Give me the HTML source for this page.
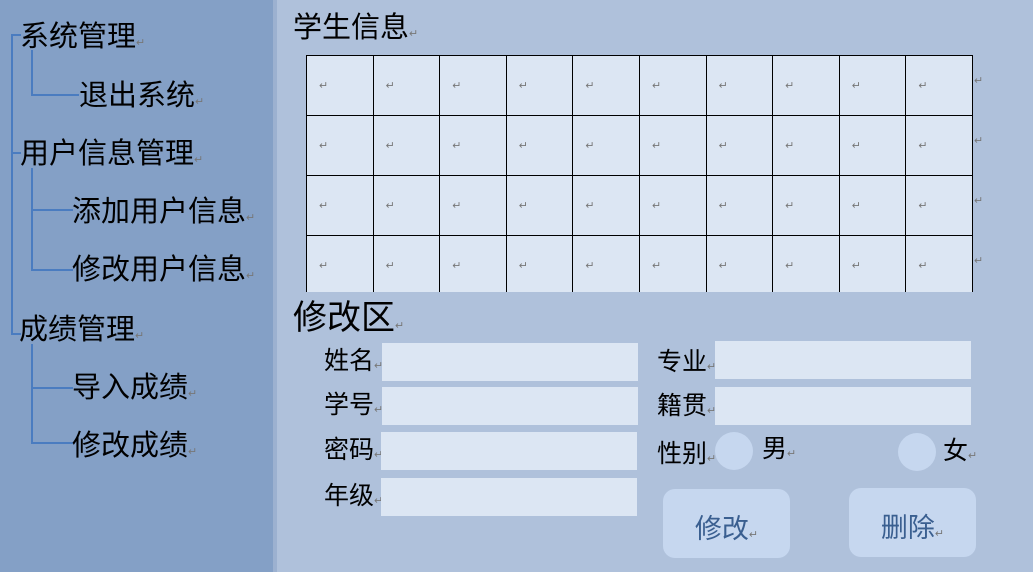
<!DOCTYPE html>
<html><head><meta charset="utf-8"><style>
*{margin:0;padding:0;box-sizing:border-box}
body{width:1033px;height:572px;overflow:hidden;position:relative;background:#afc1db;font-family:"Liberation Sans","Noto Sans CJK SC",sans-serif;color:#000}
.side{position:absolute;left:0;top:0;width:273px;height:572px;background:#84a0c6}
.t{position:absolute;white-space:nowrap;line-height:1}
.l{position:absolute;background:#4a7cc0}
.m{font-size:11px;color:#777}
table{position:absolute;left:306px;top:55px;border-collapse:collapse}
td{width:66.6px;height:60px;border:1px solid #000;background:#dce6f3;font-size:11px;color:#777;padding-left:12px}
.in{position:absolute;background:#dce6f3;width:256px;height:38px}
.c{position:absolute;width:38px;height:38px;border-radius:50%;background:#c6d7ef}
.b{position:absolute;width:127px;height:69px;border-radius:12px;background:#c6d7ef;color:#3a5f90;font-size:27px;text-align:center;line-height:1;padding-top:27px}
.s{font-size:29px}
</style></head><body>
<div class="side"></div>
<div style="position:absolute;left:273px;top:0;width:4px;height:572px;background:#9cb1d0"></div>
<div class="l" style="left:11px;top:34px;width:2px;height:301px"></div>
<div class="l" style="left:11px;top:34px;width:10px;height:2px"></div>
<div class="l" style="left:11px;top:152px;width:10px;height:2px"></div>
<div class="l" style="left:11px;top:333px;width:10px;height:2px"></div>
<div class="l" style="left:31px;top:50px;width:2px;height:46px"></div>
<div class="l" style="left:31px;top:94px;width:48px;height:2px"></div>
<div class="l" style="left:31px;top:168px;width:2px;height:103px"></div>
<div class="l" style="left:31px;top:209px;width:42px;height:2px"></div>
<div class="l" style="left:31px;top:269px;width:42px;height:2px"></div>
<div class="l" style="left:31px;top:344px;width:2px;height:100px"></div>
<div class="l" style="left:31px;top:387px;width:42px;height:2px"></div>
<div class="l" style="left:31px;top:442px;width:42px;height:2px"></div>
<div class="t s" style="left:20px;top:23px">系统管理<span class="m">↵</span></div>
<div class="t s" style="left:79px;top:82px">退出系统<span class="m">↵</span></div>
<div class="t s" style="left:20px;top:140px">用户信息管理<span class="m">↵</span></div>
<div class="t s" style="left:72px;top:198px">添加用户信息<span class="m">↵</span></div>
<div class="t s" style="left:72px;top:256px">修改用户信息<span class="m">↵</span></div>
<div class="t s" style="left:19px;top:316px">成绩管理<span class="m">↵</span></div>
<div class="t s" style="left:72px;top:374px">导入成绩<span class="m">↵</span></div>
<div class="t s" style="left:72px;top:432px">修改成绩<span class="m">↵</span></div>

<div class="t s" style="left:293px;top:14px">学生信息<span class="m">↵</span></div>
<div style="position:absolute;left:306px;top:55px;width:667px;height:237px;overflow:hidden">
<table style="left:0;top:0">
<tr><td>↵</td><td>↵</td><td>↵</td><td>↵</td><td>↵</td><td>↵</td><td>↵</td><td>↵</td><td>↵</td><td>↵</td></tr>
<tr><td>↵</td><td>↵</td><td>↵</td><td>↵</td><td>↵</td><td>↵</td><td>↵</td><td>↵</td><td>↵</td><td>↵</td></tr>
<tr><td>↵</td><td>↵</td><td>↵</td><td>↵</td><td>↵</td><td>↵</td><td>↵</td><td>↵</td><td>↵</td><td>↵</td></tr>
<tr><td>↵</td><td>↵</td><td>↵</td><td>↵</td><td>↵</td><td>↵</td><td>↵</td><td>↵</td><td>↵</td><td>↵</td></tr>
</table></div>
<div class="t m" style="left:974px;top:76px">↵</div>
<div class="t m" style="left:974px;top:136px">↵</div>
<div class="t m" style="left:974px;top:196px">↵</div>
<div class="t m" style="left:974px;top:256px">↵</div>

<div class="t" style="left:293px;top:301px;font-size:34px">修改区<span class="m">↵</span></div>
<div class="t" style="left:324px;top:349px;font-size:25px">姓名<span class="m">↵</span></div>
<div class="t" style="left:324px;top:393px;font-size:25px">学号<span class="m">↵</span></div>
<div class="t" style="left:324px;top:438px;font-size:25px">密码<span class="m">↵</span></div>
<div class="t" style="left:324px;top:484px;font-size:25px">年级<span class="m">↵</span></div>
<div class="in" style="left:382px;top:343px"></div>
<div class="in" style="left:382px;top:387px"></div>
<div class="in" style="left:381px;top:432px"></div>
<div class="in" style="left:381px;top:478px"></div>
<div class="t" style="left:657px;top:350px;font-size:25px">专业<span class="m">↵</span></div>
<div class="t" style="left:657px;top:394px;font-size:25px">籍贯<span class="m">↵</span></div>
<div class="t" style="left:657px;top:442px;font-size:25px">性别<span class="m">↵</span></div>
<div class="in" style="left:715px;top:341px"></div>
<div class="in" style="left:715px;top:387px"></div>
<div class="c" style="left:715px;top:432px"></div>
<div class="t" style="left:762px;top:437px;font-size:25px">男<span class="m">↵</span></div>
<div class="c" style="left:898px;top:433px"></div>
<div class="t" style="left:943px;top:439px;font-size:25px">女<span class="m">↵</span></div>
<div class="b" style="left:663px;top:489px">修改<span class="m">↵</span></div>
<div class="b" style="left:849px;top:488px">删除<span class="m">↵</span></div>
</body></html>
